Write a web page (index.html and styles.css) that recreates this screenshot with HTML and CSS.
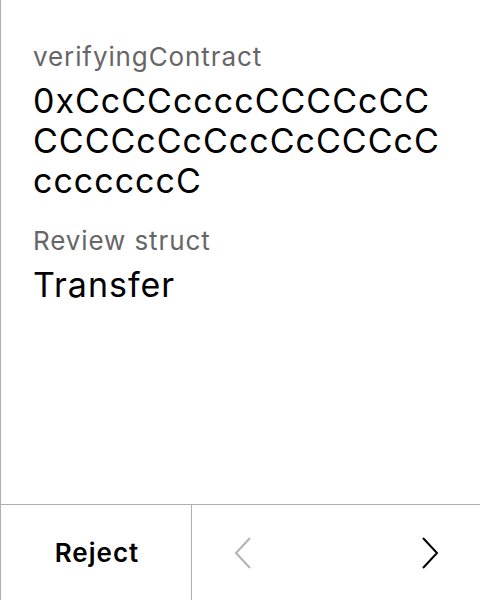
FILE: index.html
```html
<!DOCTYPE html>
<html>
<head>
<meta charset="utf-8">
<link rel="stylesheet" href="styles.css">
</head>
<body>
<div class="screen">
  <div class="content">
    <div class="field">
      <div class="label">verifyingContract</div>
      <div class="value">0xCcCCccccCCCCcCC<br>CCCCcCcCccCcCCCcC<br>cccccccC</div>
    </div>
    <div class="field">
      <div class="label">Review struct</div>
      <div class="value">Transfer</div>
    </div>
  </div>
  <div class="footer">
    <button class="reject">Reject</button>
    <div class="nav">
      <svg class="chev" width="18" height="32" viewBox="0 0 18 32"><path d="M16 1 L2 16 L16 31" fill="none" stroke="#b3b3b3" stroke-width="2"/></svg>
      <svg class="chev" width="18" height="32" viewBox="0 0 18 32"><path d="M2 1 L16 16 L2 31" fill="none" stroke="#000" stroke-width="2"/></svg>
    </div>
  </div>
</div>
</body>
</html>
```
FILE: styles.css
```css
* { box-sizing: border-box; }
html, body { margin: 0; padding: 0; background: #fff; }
body { font-family: Inter, "Noto Sans", sans-serif; color: #000; }
.screen {
  width: 480px;
  height: 600px;
  border-left: 1px solid #b0b0b0;
  display: flex;
  flex-direction: column;
}
.content {
  flex: 1;
  padding: 41px 16px 0 32px;
  display: flex;
  flex-direction: column;
  gap: 24px;
}
.label {
  font-size: 26px;
  line-height: 32px;
  letter-spacing: 0.9px;
  color: #666;
  margin-bottom: 8px;
}
.value {
  font-size: 34px;
  line-height: 40px;
  letter-spacing: 1px;
  color: #000;
  white-space: nowrap;
}
.footer {
  height: 96px;
  border-top: 1px solid #b0b0b0;
  display: flex;
}
.reject {
  width: 191px;
  border: none;
  border-right: 1px solid #b0b0b0;
  background: #fff;
  font-family: Inter, "Noto Sans", sans-serif;
  font-size: 26px;
  font-weight: 600;
  letter-spacing: 1px;
  color: #000;
  padding: 0 0 0 2px;
}
.nav {
  flex: 1;
  display: flex;
  align-items: center;
  justify-content: space-between;
  padding: 0 41px 0 42px;
}
.chev { display: block; }
```
